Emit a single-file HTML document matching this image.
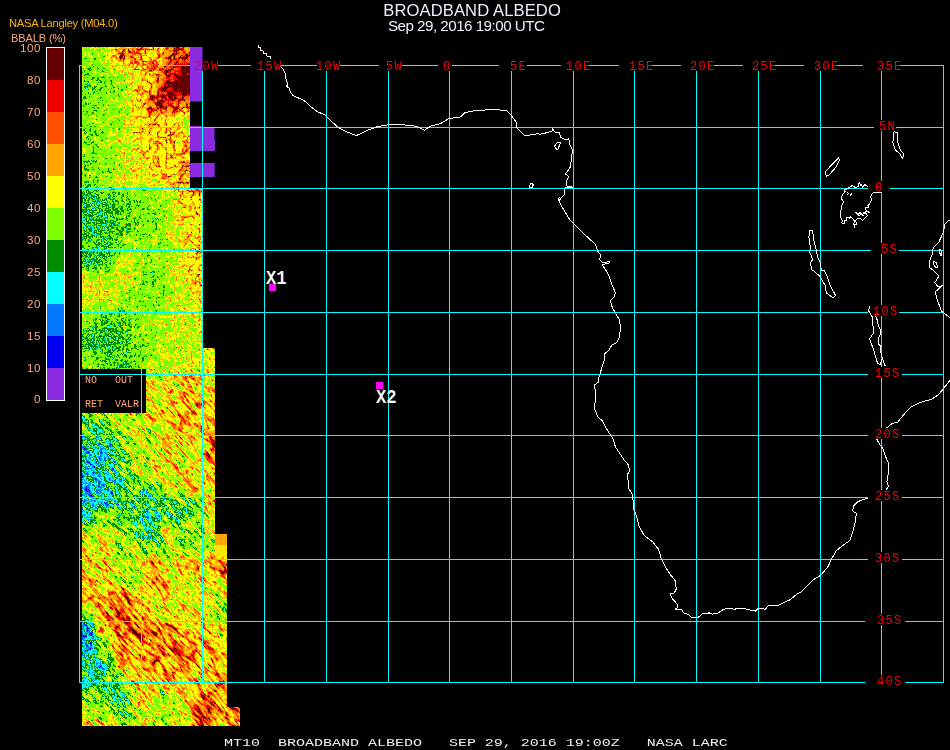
<!DOCTYPE html>
<html lang="en"><head><meta charset="utf-8"><title>BROADBAND ALBEDO Sep 29, 2016 19:00 UTC</title>
<style>
html,body{margin:0;padding:0;background:#000;}
body{width:950px;height:750px;overflow:hidden;position:relative;font-family:"Liberation Sans",sans-serif;}
svg{position:absolute;left:0;top:0;display:block;}
.t{position:absolute;white-space:pre;line-height:1;margin:0;will-change:transform;}
#title{left:0;width:944.2px;text-align:center;top:2.7px;font-size:16.6px;color:#eeeeff;letter-spacing:0.1px;}
#date{left:388px;top:18.1px;font-size:15.2px;color:#eeeeff;letter-spacing:-0.53px;}
#src{left:9.2px;top:18.2px;font-size:11.2px;color:#ffb400;letter-spacing:-0.27px;}
#unit{left:11px;top:32.9px;font-size:11px;color:#ffa878;letter-spacing:-0.1px;}
.cb{right:909.5px;font-size:11.6px;color:#ffa878;text-align:right;letter-spacing:0.5px;}
.lg{font-family:"Liberation Mono",monospace;font-size:10px;color:#ffa878;}
.gl{font-family:"Liberation Mono",monospace;font-size:12px;color:#ff0000;letter-spacing:1.3px;}
.mk{font-family:"Liberation Mono",monospace;font-weight:bold;font-size:19.5px;color:#fff;transform-origin:0 0;transform:scaleX(0.88);}
#foot{left:224px;top:738.4px;font-family:"Liberation Mono",monospace;font-size:10.6px;color:#f2f2f2;transform-origin:0 0;transform:scaleX(1.415);}
</style></head><body>
<svg width="950" height="750" viewBox="0 0 950 750">
<defs>
<filter id="nzA" x="10" y="0" width="320" height="430" filterUnits="userSpaceOnUse" color-interpolation-filters="sRGB">
<feTurbulence type="turbulence" baseFrequency="0.12" numOctaves="3" seed="4" result="n"/>
<feColorMatrix in="n" type="matrix" values="1 0 0 0 0 1 0 0 0 0 1 0 0 0 0 0 0 0 0 1" result="ng0"/>
<feComponentTransfer in="ng0" result="ng1"><feFuncR type="linear" slope="-1" intercept="1"/><feFuncG type="linear" slope="-1" intercept="1"/><feFuncB type="linear" slope="-1" intercept="1"/></feComponentTransfer>
<feComponentTransfer in="ng1" result="ng"><feFuncR type="gamma" amplitude="1" exponent="8" offset="0"/><feFuncG type="gamma" amplitude="1" exponent="8" offset="0"/><feFuncB type="gamma" amplitude="1" exponent="8" offset="0"/></feComponentTransfer>
<feGaussianBlur in="SourceGraphic" stdDeviation="4" result="bl"/>
<feComponentTransfer in="bl" result="amp"><feFuncR type="linear" slope="2.4" intercept="-0.592"/><feFuncG type="linear" slope="2.4" intercept="-0.592"/><feFuncB type="linear" slope="2.4" intercept="-0.592"/></feComponentTransfer>
<feComposite in="amp" in2="ng" operator="arithmetic" k1="1" k2="0" k3="0" k4="0" result="T"/>
<feComposite in="bl" in2="T" operator="arithmetic" k1="0" k2="0.9" k3="1" k4="0" result="v1"/>
<feTurbulence type="fractalNoise" baseFrequency="0.38" numOctaves="2" seed="9" result="m"/>
<feColorMatrix in="m" type="matrix" values="1 0 0 0 0 1 0 0 0 0 1 0 0 0 0 0 0 0 0 1" result="mg"/>
<feComposite in="v1" in2="mg" operator="arithmetic" k1="0" k2="1" k3="0.24" k4="-0.12"/>
</filter>
<filter id="nzB" x="-100" y="290" width="520" height="520" filterUnits="userSpaceOnUse" color-interpolation-filters="sRGB">
<feTurbulence type="turbulence" baseFrequency="0.05 0.22" numOctaves="2" seed="21" result="r0"/>
<feColorMatrix in="r0" type="matrix" values="1 0 0 0 0 1 0 0 0 0 1 0 0 0 0 0 0 0 0 1" result="r1"/>
<feComponentTransfer in="r1" result="r2"><feFuncR type="linear" slope="-1" intercept="1"/><feFuncG type="linear" slope="-1" intercept="1"/><feFuncB type="linear" slope="-1" intercept="1"/></feComponentTransfer>
<feComponentTransfer in="r2" result="ridge"><feFuncR type="gamma" amplitude="1" exponent="7" offset="0"/><feFuncG type="gamma" amplitude="1" exponent="7" offset="0"/><feFuncB type="gamma" amplitude="1" exponent="7" offset="0"/></feComponentTransfer>
<feTurbulence type="fractalNoise" baseFrequency="0.07 0.3" numOctaves="2" seed="11" result="n"/>
<feColorMatrix in="n" type="matrix" values="1 0 0 0 0 1 0 0 0 0 1 0 0 0 0 0 0 0 0 1" result="ng"/>
<feTurbulence type="fractalNoise" baseFrequency="0.33" numOctaves="2" seed="7" result="m"/>
<feColorMatrix in="m" type="matrix" values="1 0 0 0 0 1 0 0 0 0 1 0 0 0 0 0 0 0 0 1" result="mg"/>
<feGaussianBlur in="SourceGraphic" stdDeviation="4" result="bl"/>
<feComposite in="bl" in2="ridge" operator="arithmetic" k1="1" k2="0.85" k3="0" k4="0" result="v1"/>
<feComposite in="v1" in2="ng" operator="arithmetic" k1="0.7" k2="0.65" k3="0" k4="0" result="v2"/>
<feComposite in="v2" in2="mg" operator="arithmetic" k1="0" k2="1" k3="0.3" k4="-0.15"/>
</filter>
<filter id="pal" x="0" y="0" width="950" height="750" filterUnits="userSpaceOnUse" color-interpolation-filters="sRGB">
<feComponentTransfer><feFuncR type="discrete" tableValues="0.541 0.541 0.000 0.000 0.000 0.000 0.498 0.498 1.000 1.000 1.000 1.000 1.000 1.000 0.933 0.933 0.392 0.392 0.392 0.392"/><feFuncG type="discrete" tableValues="0.169 0.169 0.000 0.471 1.000 0.545 1.000 1.000 1.000 1.000 0.647 0.647 0.314 0.314 0.000 0.000 0.000 0.000 0.000 0.000"/><feFuncB type="discrete" tableValues="0.886 0.886 0.933 1.000 1.000 0.000 0.000 0.000 0.000 0.000 0.000 0.000 0.000 0.000 0.000 0.000 0.000 0.000 0.000 0.000"/></feComponentTransfer>
</filter>
<clipPath id="dc"><path d="M82 47H190V188H202V350Q202 348 204 348H213Q215 348 215 350V534H227V707H240V726H82V413H146V369H82Z"/></clipPath>
<clipPath id="dcA"><rect x="60" y="30" width="200" height="339"/></clipPath>
<clipPath id="dcB"><rect x="60" y="369" width="200" height="380"/></clipPath>
</defs>
<g clip-path="url(#dc)"><g filter="url(#pal)">
<g clip-path="url(#dcA)"><g filter="url(#nzA)"><rect x="20" y="0" width="280" height="750" fill="#666"/><rect x="52" y="17" width="47" height="47" fill="rgb(97,97,97)"/><rect x="98" y="17" width="17" height="47" fill="rgb(102,102,102)"/><rect x="114" y="17" width="17" height="47" fill="rgb(148,148,148)"/><rect x="130" y="17" width="17" height="47" fill="rgb(135,135,135)"/><rect x="146" y="17" width="17" height="47" fill="rgb(115,115,115)"/><rect x="162" y="17" width="17" height="47" fill="rgb(158,158,158)"/><rect x="178" y="17" width="17" height="47" fill="rgb(158,158,158)"/><rect x="194" y="17" width="17" height="47" fill="rgb(158,158,158)"/><rect x="210" y="17" width="17" height="47" fill="rgb(158,158,158)"/><rect x="226" y="17" width="47" height="47" fill="rgb(158,158,158)"/><rect x="52" y="63" width="47" height="17" fill="rgb(89,89,89)"/><rect x="98" y="63" width="17" height="17" fill="rgb(92,92,92)"/><rect x="114" y="63" width="17" height="17" fill="rgb(102,102,102)"/><rect x="130" y="63" width="17" height="17" fill="rgb(117,117,117)"/><rect x="146" y="63" width="17" height="17" fill="rgb(130,130,130)"/><rect x="162" y="63" width="17" height="17" fill="rgb(184,184,184)"/><rect x="178" y="63" width="17" height="17" fill="rgb(230,230,230)"/><rect x="194" y="63" width="17" height="17" fill="rgb(230,230,230)"/><rect x="210" y="63" width="17" height="17" fill="rgb(230,230,230)"/><rect x="226" y="63" width="47" height="17" fill="rgb(230,230,230)"/><rect x="52" y="79" width="47" height="17" fill="rgb(84,84,84)"/><rect x="98" y="79" width="17" height="17" fill="rgb(89,89,89)"/><rect x="114" y="79" width="17" height="17" fill="rgb(94,94,94)"/><rect x="130" y="79" width="17" height="17" fill="rgb(115,115,115)"/><rect x="146" y="79" width="17" height="17" fill="rgb(135,135,135)"/><rect x="162" y="79" width="17" height="17" fill="rgb(204,204,204)"/><rect x="178" y="79" width="17" height="17" fill="rgb(240,240,240)"/><rect x="194" y="79" width="17" height="17" fill="rgb(240,240,240)"/><rect x="210" y="79" width="17" height="17" fill="rgb(240,240,240)"/><rect x="226" y="79" width="47" height="17" fill="rgb(240,240,240)"/><rect x="52" y="95" width="47" height="17" fill="rgb(84,84,84)"/><rect x="98" y="95" width="17" height="17" fill="rgb(92,92,92)"/><rect x="114" y="95" width="17" height="17" fill="rgb(94,94,94)"/><rect x="130" y="95" width="17" height="17" fill="rgb(117,117,117)"/><rect x="146" y="95" width="17" height="17" fill="rgb(168,168,168)"/><rect x="162" y="95" width="17" height="17" fill="rgb(176,176,176)"/><rect x="178" y="95" width="17" height="17" fill="rgb(148,148,148)"/><rect x="194" y="95" width="17" height="17" fill="rgb(148,148,148)"/><rect x="210" y="95" width="17" height="17" fill="rgb(148,148,148)"/><rect x="226" y="95" width="47" height="17" fill="rgb(148,148,148)"/><rect x="52" y="111" width="47" height="17" fill="rgb(89,89,89)"/><rect x="98" y="111" width="17" height="17" fill="rgb(92,92,92)"/><rect x="114" y="111" width="17" height="17" fill="rgb(97,97,97)"/><rect x="130" y="111" width="17" height="17" fill="rgb(120,120,120)"/><rect x="146" y="111" width="17" height="17" fill="rgb(135,135,135)"/><rect x="162" y="111" width="17" height="17" fill="rgb(125,125,125)"/><rect x="178" y="111" width="17" height="17" fill="rgb(97,97,97)"/><rect x="194" y="111" width="17" height="17" fill="rgb(97,97,97)"/><rect x="210" y="111" width="17" height="17" fill="rgb(97,97,97)"/><rect x="226" y="111" width="47" height="17" fill="rgb(97,97,97)"/><rect x="52" y="127" width="47" height="17" fill="rgb(89,89,89)"/><rect x="98" y="127" width="17" height="17" fill="rgb(92,92,92)"/><rect x="114" y="127" width="17" height="17" fill="rgb(102,102,102)"/><rect x="130" y="127" width="17" height="17" fill="rgb(120,120,120)"/><rect x="146" y="127" width="17" height="17" fill="rgb(130,130,130)"/><rect x="162" y="127" width="17" height="17" fill="rgb(122,122,122)"/><rect x="178" y="127" width="17" height="17" fill="rgb(115,115,115)"/><rect x="194" y="127" width="17" height="17" fill="rgb(115,115,115)"/><rect x="210" y="127" width="17" height="17" fill="rgb(115,115,115)"/><rect x="226" y="127" width="47" height="17" fill="rgb(115,115,115)"/><rect x="52" y="143" width="47" height="17" fill="rgb(89,89,89)"/><rect x="98" y="143" width="17" height="17" fill="rgb(92,92,92)"/><rect x="114" y="143" width="17" height="17" fill="rgb(102,102,102)"/><rect x="130" y="143" width="17" height="17" fill="rgb(115,115,115)"/><rect x="146" y="143" width="17" height="17" fill="rgb(125,125,125)"/><rect x="162" y="143" width="17" height="17" fill="rgb(125,125,125)"/><rect x="178" y="143" width="17" height="17" fill="rgb(125,125,125)"/><rect x="194" y="143" width="17" height="17" fill="rgb(125,125,125)"/><rect x="210" y="143" width="17" height="17" fill="rgb(125,125,125)"/><rect x="226" y="143" width="47" height="17" fill="rgb(125,125,125)"/><rect x="52" y="159" width="47" height="17" fill="rgb(87,87,87)"/><rect x="98" y="159" width="17" height="17" fill="rgb(92,92,92)"/><rect x="114" y="159" width="17" height="17" fill="rgb(99,99,99)"/><rect x="130" y="159" width="17" height="17" fill="rgb(112,112,112)"/><rect x="146" y="159" width="17" height="17" fill="rgb(120,120,120)"/><rect x="162" y="159" width="17" height="17" fill="rgb(122,122,122)"/><rect x="178" y="159" width="17" height="17" fill="rgb(145,145,145)"/><rect x="194" y="159" width="17" height="17" fill="rgb(145,145,145)"/><rect x="210" y="159" width="17" height="17" fill="rgb(145,145,145)"/><rect x="226" y="159" width="47" height="17" fill="rgb(145,145,145)"/><rect x="52" y="175" width="47" height="17" fill="rgb(89,89,89)"/><rect x="98" y="175" width="17" height="17" fill="rgb(92,92,92)"/><rect x="114" y="175" width="17" height="17" fill="rgb(97,97,97)"/><rect x="130" y="175" width="17" height="17" fill="rgb(102,102,102)"/><rect x="146" y="175" width="17" height="17" fill="rgb(110,110,110)"/><rect x="162" y="175" width="17" height="17" fill="rgb(117,117,117)"/><rect x="178" y="175" width="17" height="17" fill="rgb(145,145,145)"/><rect x="194" y="175" width="17" height="17" fill="rgb(145,145,145)"/><rect x="210" y="175" width="17" height="17" fill="rgb(145,145,145)"/><rect x="226" y="175" width="47" height="17" fill="rgb(145,145,145)"/><rect x="52" y="191" width="47" height="17" fill="rgb(74,74,74)"/><rect x="98" y="191" width="17" height="17" fill="rgb(79,79,79)"/><rect x="114" y="191" width="17" height="17" fill="rgb(84,84,84)"/><rect x="130" y="191" width="17" height="17" fill="rgb(89,89,89)"/><rect x="146" y="191" width="17" height="17" fill="rgb(89,89,89)"/><rect x="162" y="191" width="17" height="17" fill="rgb(97,97,97)"/><rect x="178" y="191" width="17" height="17" fill="rgb(120,120,120)"/><rect x="194" y="191" width="17" height="17" fill="rgb(125,125,125)"/><rect x="210" y="191" width="17" height="17" fill="rgb(125,125,125)"/><rect x="226" y="191" width="47" height="17" fill="rgb(125,125,125)"/><rect x="52" y="207" width="47" height="17" fill="rgb(74,74,74)"/><rect x="98" y="207" width="17" height="17" fill="rgb(76,76,76)"/><rect x="114" y="207" width="17" height="17" fill="rgb(82,82,82)"/><rect x="130" y="207" width="17" height="17" fill="rgb(89,89,89)"/><rect x="146" y="207" width="17" height="17" fill="rgb(92,92,92)"/><rect x="162" y="207" width="17" height="17" fill="rgb(97,97,97)"/><rect x="178" y="207" width="17" height="17" fill="rgb(117,117,117)"/><rect x="194" y="207" width="17" height="17" fill="rgb(122,122,122)"/><rect x="210" y="207" width="17" height="17" fill="rgb(122,122,122)"/><rect x="226" y="207" width="47" height="17" fill="rgb(122,122,122)"/><rect x="52" y="223" width="47" height="17" fill="rgb(74,74,74)"/><rect x="98" y="223" width="17" height="17" fill="rgb(76,76,76)"/><rect x="114" y="223" width="17" height="17" fill="rgb(82,82,82)"/><rect x="130" y="223" width="17" height="17" fill="rgb(89,89,89)"/><rect x="146" y="223" width="17" height="17" fill="rgb(92,92,92)"/><rect x="162" y="223" width="17" height="17" fill="rgb(97,97,97)"/><rect x="178" y="223" width="17" height="17" fill="rgb(115,115,115)"/><rect x="194" y="223" width="17" height="17" fill="rgb(120,120,120)"/><rect x="210" y="223" width="17" height="17" fill="rgb(120,120,120)"/><rect x="226" y="223" width="47" height="17" fill="rgb(120,120,120)"/><rect x="52" y="239" width="47" height="17" fill="rgb(79,79,79)"/><rect x="98" y="239" width="17" height="17" fill="rgb(79,79,79)"/><rect x="114" y="239" width="17" height="17" fill="rgb(92,92,92)"/><rect x="130" y="239" width="17" height="17" fill="rgb(94,94,94)"/><rect x="146" y="239" width="17" height="17" fill="rgb(94,94,94)"/><rect x="162" y="239" width="17" height="17" fill="rgb(99,99,99)"/><rect x="178" y="239" width="17" height="17" fill="rgb(115,115,115)"/><rect x="194" y="239" width="17" height="17" fill="rgb(122,122,122)"/><rect x="210" y="239" width="17" height="17" fill="rgb(122,122,122)"/><rect x="226" y="239" width="47" height="17" fill="rgb(122,122,122)"/><rect x="52" y="255" width="47" height="17" fill="rgb(76,76,76)"/><rect x="98" y="255" width="17" height="17" fill="rgb(76,76,76)"/><rect x="114" y="255" width="17" height="17" fill="rgb(99,99,99)"/><rect x="130" y="255" width="17" height="17" fill="rgb(97,97,97)"/><rect x="146" y="255" width="17" height="17" fill="rgb(92,92,92)"/><rect x="162" y="255" width="17" height="17" fill="rgb(97,97,97)"/><rect x="178" y="255" width="17" height="17" fill="rgb(115,115,115)"/><rect x="194" y="255" width="17" height="17" fill="rgb(125,125,125)"/><rect x="210" y="255" width="17" height="17" fill="rgb(125,125,125)"/><rect x="226" y="255" width="47" height="17" fill="rgb(125,125,125)"/><rect x="52" y="271" width="47" height="17" fill="rgb(105,105,105)"/><rect x="98" y="271" width="17" height="17" fill="rgb(102,102,102)"/><rect x="114" y="271" width="17" height="17" fill="rgb(102,102,102)"/><rect x="130" y="271" width="17" height="17" fill="rgb(92,92,92)"/><rect x="146" y="271" width="17" height="17" fill="rgb(89,89,89)"/><rect x="162" y="271" width="17" height="17" fill="rgb(97,97,97)"/><rect x="178" y="271" width="17" height="17" fill="rgb(115,115,115)"/><rect x="194" y="271" width="17" height="17" fill="rgb(125,125,125)"/><rect x="210" y="271" width="17" height="17" fill="rgb(125,125,125)"/><rect x="226" y="271" width="47" height="17" fill="rgb(125,125,125)"/><rect x="52" y="287" width="47" height="17" fill="rgb(112,112,112)"/><rect x="98" y="287" width="17" height="17" fill="rgb(110,110,110)"/><rect x="114" y="287" width="17" height="17" fill="rgb(102,102,102)"/><rect x="130" y="287" width="17" height="17" fill="rgb(92,92,92)"/><rect x="146" y="287" width="17" height="17" fill="rgb(92,92,92)"/><rect x="162" y="287" width="17" height="17" fill="rgb(97,97,97)"/><rect x="178" y="287" width="17" height="17" fill="rgb(107,107,107)"/><rect x="194" y="287" width="17" height="17" fill="rgb(117,117,117)"/><rect x="210" y="287" width="17" height="17" fill="rgb(117,117,117)"/><rect x="226" y="287" width="47" height="17" fill="rgb(117,117,117)"/><rect x="52" y="303" width="47" height="17" fill="rgb(99,99,99)"/><rect x="98" y="303" width="17" height="17" fill="rgb(89,89,89)"/><rect x="114" y="303" width="17" height="17" fill="rgb(87,87,87)"/><rect x="130" y="303" width="17" height="17" fill="rgb(92,92,92)"/><rect x="146" y="303" width="17" height="17" fill="rgb(94,94,94)"/><rect x="162" y="303" width="17" height="17" fill="rgb(99,99,99)"/><rect x="178" y="303" width="17" height="17" fill="rgb(105,105,105)"/><rect x="194" y="303" width="17" height="17" fill="rgb(115,115,115)"/><rect x="210" y="303" width="17" height="17" fill="rgb(115,115,115)"/><rect x="226" y="303" width="47" height="17" fill="rgb(115,115,115)"/><rect x="52" y="319" width="47" height="17" fill="rgb(84,84,84)"/><rect x="98" y="319" width="17" height="17" fill="rgb(76,76,76)"/><rect x="114" y="319" width="17" height="17" fill="rgb(79,79,79)"/><rect x="130" y="319" width="17" height="17" fill="rgb(92,92,92)"/><rect x="146" y="319" width="17" height="17" fill="rgb(97,97,97)"/><rect x="162" y="319" width="17" height="17" fill="rgb(102,102,102)"/><rect x="178" y="319" width="17" height="17" fill="rgb(102,102,102)"/><rect x="194" y="319" width="17" height="17" fill="rgb(115,115,115)"/><rect x="210" y="319" width="17" height="17" fill="rgb(115,115,115)"/><rect x="226" y="319" width="47" height="17" fill="rgb(115,115,115)"/><rect x="52" y="335" width="47" height="17" fill="rgb(74,74,74)"/><rect x="98" y="335" width="17" height="17" fill="rgb(74,74,74)"/><rect x="114" y="335" width="17" height="17" fill="rgb(76,76,76)"/><rect x="130" y="335" width="17" height="17" fill="rgb(87,87,87)"/><rect x="146" y="335" width="17" height="17" fill="rgb(97,97,97)"/><rect x="162" y="335" width="17" height="17" fill="rgb(102,102,102)"/><rect x="178" y="335" width="17" height="17" fill="rgb(102,102,102)"/><rect x="194" y="335" width="17" height="17" fill="rgb(112,112,112)"/><rect x="210" y="335" width="17" height="17" fill="rgb(112,112,112)"/><rect x="226" y="335" width="47" height="17" fill="rgb(112,112,112)"/><rect x="52" y="351" width="47" height="17" fill="rgb(89,89,89)"/><rect x="98" y="351" width="17" height="17" fill="rgb(82,82,82)"/><rect x="114" y="351" width="17" height="17" fill="rgb(79,79,79)"/><rect x="130" y="351" width="17" height="17" fill="rgb(87,87,87)"/><rect x="146" y="351" width="17" height="17" fill="rgb(97,97,97)"/><rect x="162" y="351" width="17" height="17" fill="rgb(99,99,99)"/><rect x="178" y="351" width="17" height="17" fill="rgb(105,105,105)"/><rect x="194" y="351" width="17" height="17" fill="rgb(110,110,110)"/><rect x="210" y="351" width="17" height="17" fill="rgb(120,120,120)"/><rect x="226" y="351" width="47" height="17" fill="rgb(120,120,120)"/><rect x="52" y="367" width="47" height="17" fill="rgb(89,89,89)"/><rect x="98" y="367" width="17" height="17" fill="rgb(82,82,82)"/><rect x="114" y="367" width="17" height="17" fill="rgb(82,82,82)"/><rect x="130" y="367" width="17" height="17" fill="rgb(87,87,87)"/><rect x="146" y="367" width="17" height="17" fill="rgb(97,97,97)"/><rect x="162" y="367" width="17" height="17" fill="rgb(102,102,102)"/><rect x="178" y="367" width="17" height="17" fill="rgb(112,112,112)"/><rect x="194" y="367" width="17" height="17" fill="rgb(107,107,107)"/><rect x="210" y="367" width="17" height="17" fill="rgb(112,112,112)"/><rect x="226" y="367" width="47" height="17" fill="rgb(112,112,112)"/><rect x="52" y="383" width="47" height="17" fill="rgb(97,97,97)"/><rect x="98" y="383" width="17" height="17" fill="rgb(97,97,97)"/><rect x="114" y="383" width="17" height="17" fill="rgb(97,97,97)"/><rect x="130" y="383" width="17" height="17" fill="rgb(102,102,102)"/><rect x="146" y="383" width="17" height="17" fill="rgb(107,107,107)"/><rect x="162" y="383" width="17" height="17" fill="rgb(112,112,112)"/><rect x="178" y="383" width="17" height="17" fill="rgb(122,122,122)"/><rect x="194" y="383" width="17" height="17" fill="rgb(112,112,112)"/><rect x="210" y="383" width="17" height="17" fill="rgb(117,117,117)"/><rect x="226" y="383" width="47" height="17" fill="rgb(117,117,117)"/><rect x="52" y="399" width="47" height="17" fill="rgb(89,89,89)"/><rect x="98" y="399" width="17" height="17" fill="rgb(89,89,89)"/><rect x="114" y="399" width="17" height="17" fill="rgb(94,94,94)"/><rect x="130" y="399" width="17" height="17" fill="rgb(102,102,102)"/><rect x="146" y="399" width="17" height="17" fill="rgb(107,107,107)"/><rect x="162" y="399" width="17" height="17" fill="rgb(117,117,117)"/><rect x="178" y="399" width="17" height="17" fill="rgb(128,128,128)"/><rect x="194" y="399" width="17" height="17" fill="rgb(122,122,122)"/><rect x="210" y="399" width="17" height="17" fill="rgb(128,128,128)"/><rect x="226" y="399" width="47" height="17" fill="rgb(128,128,128)"/><rect x="52" y="415" width="47" height="17" fill="rgb(76,76,76)"/><rect x="98" y="415" width="17" height="17" fill="rgb(87,87,87)"/><rect x="114" y="415" width="17" height="17" fill="rgb(97,97,97)"/><rect x="130" y="415" width="17" height="17" fill="rgb(112,112,112)"/><rect x="146" y="415" width="17" height="17" fill="rgb(107,107,107)"/><rect x="162" y="415" width="17" height="17" fill="rgb(117,117,117)"/><rect x="178" y="415" width="17" height="17" fill="rgb(117,117,117)"/><rect x="194" y="415" width="17" height="17" fill="rgb(122,122,122)"/><rect x="210" y="415" width="17" height="17" fill="rgb(122,122,122)"/><rect x="226" y="415" width="47" height="17" fill="rgb(122,122,122)"/><rect x="52" y="431" width="47" height="17" fill="rgb(61,61,61)"/><rect x="98" y="431" width="17" height="17" fill="rgb(66,66,66)"/><rect x="114" y="431" width="17" height="17" fill="rgb(82,82,82)"/><rect x="130" y="431" width="17" height="17" fill="rgb(92,92,92)"/><rect x="146" y="431" width="17" height="17" fill="rgb(97,97,97)"/><rect x="162" y="431" width="17" height="17" fill="rgb(115,115,115)"/><rect x="178" y="431" width="17" height="17" fill="rgb(128,128,128)"/><rect x="194" y="431" width="17" height="17" fill="rgb(117,117,117)"/><rect x="210" y="431" width="17" height="17" fill="rgb(163,163,163)"/><rect x="226" y="431" width="47" height="17" fill="rgb(163,163,163)"/><rect x="52" y="447" width="47" height="17" fill="rgb(51,51,51)"/><rect x="98" y="447" width="17" height="17" fill="rgb(56,56,56)"/><rect x="114" y="447" width="17" height="17" fill="rgb(82,82,82)"/><rect x="130" y="447" width="17" height="17" fill="rgb(94,94,94)"/><rect x="146" y="447" width="17" height="17" fill="rgb(97,97,97)"/><rect x="162" y="447" width="17" height="17" fill="rgb(107,107,107)"/><rect x="178" y="447" width="17" height="17" fill="rgb(102,102,102)"/><rect x="194" y="447" width="17" height="17" fill="rgb(107,107,107)"/><rect x="210" y="447" width="17" height="17" fill="rgb(158,158,158)"/><rect x="226" y="447" width="47" height="17" fill="rgb(158,158,158)"/><rect x="52" y="463" width="47" height="17" fill="rgb(48,48,48)"/><rect x="98" y="463" width="17" height="17" fill="rgb(54,54,54)"/><rect x="114" y="463" width="17" height="17" fill="rgb(76,76,76)"/><rect x="130" y="463" width="17" height="17" fill="rgb(89,89,89)"/><rect x="146" y="463" width="17" height="17" fill="rgb(107,107,107)"/><rect x="162" y="463" width="17" height="17" fill="rgb(110,110,110)"/><rect x="178" y="463" width="17" height="17" fill="rgb(107,107,107)"/><rect x="194" y="463" width="17" height="17" fill="rgb(107,107,107)"/><rect x="210" y="463" width="17" height="17" fill="rgb(138,138,138)"/><rect x="226" y="463" width="47" height="17" fill="rgb(138,138,138)"/><rect x="52" y="479" width="47" height="17" fill="rgb(48,48,48)"/><rect x="98" y="479" width="17" height="17" fill="rgb(54,54,54)"/><rect x="114" y="479" width="17" height="17" fill="rgb(66,66,66)"/><rect x="130" y="479" width="17" height="17" fill="rgb(76,76,76)"/><rect x="146" y="479" width="17" height="17" fill="rgb(69,69,69)"/><rect x="162" y="479" width="17" height="17" fill="rgb(92,92,92)"/><rect x="178" y="479" width="17" height="17" fill="rgb(107,107,107)"/><rect x="194" y="479" width="17" height="17" fill="rgb(110,110,110)"/><rect x="210" y="479" width="17" height="17" fill="rgb(138,138,138)"/><rect x="226" y="479" width="47" height="17" fill="rgb(138,138,138)"/><rect x="52" y="495" width="47" height="17" fill="rgb(54,54,54)"/><rect x="98" y="495" width="17" height="17" fill="rgb(61,61,61)"/><rect x="114" y="495" width="17" height="17" fill="rgb(66,66,66)"/><rect x="130" y="495" width="17" height="17" fill="rgb(71,71,71)"/><rect x="146" y="495" width="17" height="17" fill="rgb(66,66,66)"/><rect x="162" y="495" width="17" height="17" fill="rgb(66,66,66)"/><rect x="178" y="495" width="17" height="17" fill="rgb(76,76,76)"/><rect x="194" y="495" width="17" height="17" fill="rgb(92,92,92)"/><rect x="210" y="495" width="17" height="17" fill="rgb(143,143,143)"/><rect x="226" y="495" width="47" height="17" fill="rgb(143,143,143)"/><rect x="52" y="511" width="47" height="17" fill="rgb(61,61,61)"/><rect x="98" y="511" width="17" height="17" fill="rgb(92,92,92)"/><rect x="114" y="511" width="17" height="17" fill="rgb(76,76,76)"/><rect x="130" y="511" width="17" height="17" fill="rgb(66,66,66)"/><rect x="146" y="511" width="17" height="17" fill="rgb(66,66,66)"/><rect x="162" y="511" width="17" height="17" fill="rgb(66,66,66)"/><rect x="178" y="511" width="17" height="17" fill="rgb(76,76,76)"/><rect x="194" y="511" width="17" height="17" fill="rgb(87,87,87)"/><rect x="210" y="511" width="17" height="17" fill="rgb(117,117,117)"/><rect x="226" y="511" width="47" height="17" fill="rgb(117,117,117)"/><rect x="52" y="527" width="47" height="17" fill="rgb(102,102,102)"/><rect x="98" y="527" width="17" height="17" fill="rgb(107,107,107)"/><rect x="114" y="527" width="17" height="17" fill="rgb(82,82,82)"/><rect x="130" y="527" width="17" height="17" fill="rgb(66,66,66)"/><rect x="146" y="527" width="17" height="17" fill="rgb(66,66,66)"/><rect x="162" y="527" width="17" height="17" fill="rgb(102,102,102)"/><rect x="178" y="527" width="17" height="17" fill="rgb(84,84,84)"/><rect x="194" y="527" width="17" height="17" fill="rgb(87,87,87)"/><rect x="210" y="527" width="17" height="17" fill="rgb(102,102,102)"/><rect x="226" y="527" width="47" height="17" fill="rgb(128,128,128)"/><rect x="52" y="543" width="47" height="17" fill="rgb(112,112,112)"/><rect x="98" y="543" width="17" height="17" fill="rgb(112,112,112)"/><rect x="114" y="543" width="17" height="17" fill="rgb(92,92,92)"/><rect x="130" y="543" width="17" height="17" fill="rgb(107,107,107)"/><rect x="146" y="543" width="17" height="17" fill="rgb(76,76,76)"/><rect x="162" y="543" width="17" height="17" fill="rgb(97,97,97)"/><rect x="178" y="543" width="17" height="17" fill="rgb(92,92,92)"/><rect x="194" y="543" width="17" height="17" fill="rgb(89,89,89)"/><rect x="210" y="543" width="17" height="17" fill="rgb(115,115,115)"/><rect x="226" y="543" width="47" height="17" fill="rgb(107,107,107)"/><rect x="52" y="559" width="47" height="17" fill="rgb(112,112,112)"/><rect x="98" y="559" width="17" height="17" fill="rgb(122,122,122)"/><rect x="114" y="559" width="17" height="17" fill="rgb(87,87,87)"/><rect x="130" y="559" width="17" height="17" fill="rgb(107,107,107)"/><rect x="146" y="559" width="17" height="17" fill="rgb(138,138,138)"/><rect x="162" y="559" width="17" height="17" fill="rgb(92,92,92)"/><rect x="178" y="559" width="17" height="17" fill="rgb(138,138,138)"/><rect x="194" y="559" width="17" height="17" fill="rgb(107,107,107)"/><rect x="210" y="559" width="17" height="17" fill="rgb(148,148,148)"/><rect x="226" y="559" width="47" height="17" fill="rgb(148,148,148)"/><rect x="52" y="575" width="47" height="17" fill="rgb(122,122,122)"/><rect x="98" y="575" width="17" height="17" fill="rgb(117,117,117)"/><rect x="114" y="575" width="17" height="17" fill="rgb(87,87,87)"/><rect x="130" y="575" width="17" height="17" fill="rgb(97,97,97)"/><rect x="146" y="575" width="17" height="17" fill="rgb(143,143,143)"/><rect x="162" y="575" width="17" height="17" fill="rgb(107,107,107)"/><rect x="178" y="575" width="17" height="17" fill="rgb(102,102,102)"/><rect x="194" y="575" width="17" height="17" fill="rgb(107,107,107)"/><rect x="210" y="575" width="17" height="17" fill="rgb(112,112,112)"/><rect x="226" y="575" width="47" height="17" fill="rgb(112,112,112)"/><rect x="52" y="591" width="47" height="17" fill="rgb(112,112,112)"/><rect x="98" y="591" width="17" height="17" fill="rgb(133,133,133)"/><rect x="114" y="591" width="17" height="17" fill="rgb(153,153,153)"/><rect x="130" y="591" width="17" height="17" fill="rgb(122,122,122)"/><rect x="146" y="591" width="17" height="17" fill="rgb(92,92,92)"/><rect x="162" y="591" width="17" height="17" fill="rgb(128,128,128)"/><rect x="178" y="591" width="17" height="17" fill="rgb(112,112,112)"/><rect x="194" y="591" width="17" height="17" fill="rgb(112,112,112)"/><rect x="210" y="591" width="17" height="17" fill="rgb(97,97,97)"/><rect x="226" y="591" width="47" height="17" fill="rgb(97,97,97)"/><rect x="52" y="607" width="47" height="17" fill="rgb(87,87,87)"/><rect x="98" y="607" width="17" height="17" fill="rgb(122,122,122)"/><rect x="114" y="607" width="17" height="17" fill="rgb(158,158,158)"/><rect x="130" y="607" width="17" height="17" fill="rgb(148,148,148)"/><rect x="146" y="607" width="17" height="17" fill="rgb(102,102,102)"/><rect x="162" y="607" width="17" height="17" fill="rgb(107,107,107)"/><rect x="178" y="607" width="17" height="17" fill="rgb(120,120,120)"/><rect x="194" y="607" width="17" height="17" fill="rgb(107,107,107)"/><rect x="210" y="607" width="17" height="17" fill="rgb(92,92,92)"/><rect x="226" y="607" width="47" height="17" fill="rgb(92,92,92)"/><rect x="52" y="623" width="47" height="17" fill="rgb(51,51,51)"/><rect x="98" y="623" width="17" height="17" fill="rgb(122,122,122)"/><rect x="114" y="623" width="17" height="17" fill="rgb(138,138,138)"/><rect x="130" y="623" width="17" height="17" fill="rgb(153,153,153)"/><rect x="146" y="623" width="17" height="17" fill="rgb(156,156,156)"/><rect x="162" y="623" width="17" height="17" fill="rgb(143,143,143)"/><rect x="178" y="623" width="17" height="17" fill="rgb(112,112,112)"/><rect x="194" y="623" width="17" height="17" fill="rgb(122,122,122)"/><rect x="210" y="623" width="17" height="17" fill="rgb(112,112,112)"/><rect x="226" y="623" width="47" height="17" fill="rgb(112,112,112)"/><rect x="52" y="639" width="47" height="17" fill="rgb(48,48,48)"/><rect x="98" y="639" width="17" height="17" fill="rgb(97,97,97)"/><rect x="114" y="639" width="17" height="17" fill="rgb(135,135,135)"/><rect x="130" y="639" width="17" height="17" fill="rgb(138,138,138)"/><rect x="146" y="639" width="17" height="17" fill="rgb(150,150,150)"/><rect x="162" y="639" width="17" height="17" fill="rgb(143,143,143)"/><rect x="178" y="639" width="17" height="17" fill="rgb(133,133,133)"/><rect x="194" y="639" width="17" height="17" fill="rgb(128,128,128)"/><rect x="210" y="639" width="17" height="17" fill="rgb(128,128,128)"/><rect x="226" y="639" width="47" height="17" fill="rgb(128,128,128)"/><rect x="52" y="655" width="47" height="17" fill="rgb(54,54,54)"/><rect x="98" y="655" width="17" height="17" fill="rgb(69,69,69)"/><rect x="114" y="655" width="17" height="17" fill="rgb(122,122,122)"/><rect x="130" y="655" width="17" height="17" fill="rgb(135,135,135)"/><rect x="146" y="655" width="17" height="17" fill="rgb(143,143,143)"/><rect x="162" y="655" width="17" height="17" fill="rgb(133,133,133)"/><rect x="178" y="655" width="17" height="17" fill="rgb(138,138,138)"/><rect x="194" y="655" width="17" height="17" fill="rgb(128,128,128)"/><rect x="210" y="655" width="17" height="17" fill="rgb(122,122,122)"/><rect x="226" y="655" width="47" height="17" fill="rgb(122,122,122)"/><rect x="52" y="671" width="47" height="17" fill="rgb(66,66,66)"/><rect x="98" y="671" width="17" height="17" fill="rgb(71,71,71)"/><rect x="114" y="671" width="17" height="17" fill="rgb(82,82,82)"/><rect x="130" y="671" width="17" height="17" fill="rgb(133,133,133)"/><rect x="146" y="671" width="17" height="17" fill="rgb(117,117,117)"/><rect x="162" y="671" width="17" height="17" fill="rgb(138,138,138)"/><rect x="178" y="671" width="17" height="17" fill="rgb(122,122,122)"/><rect x="194" y="671" width="17" height="17" fill="rgb(112,112,112)"/><rect x="210" y="671" width="17" height="17" fill="rgb(138,138,138)"/><rect x="226" y="671" width="47" height="17" fill="rgb(138,138,138)"/><rect x="52" y="687" width="47" height="17" fill="rgb(76,76,76)"/><rect x="98" y="687" width="17" height="17" fill="rgb(76,76,76)"/><rect x="114" y="687" width="17" height="17" fill="rgb(66,66,66)"/><rect x="130" y="687" width="17" height="17" fill="rgb(117,117,117)"/><rect x="146" y="687" width="17" height="17" fill="rgb(102,102,102)"/><rect x="162" y="687" width="17" height="17" fill="rgb(94,94,94)"/><rect x="178" y="687" width="17" height="17" fill="rgb(107,107,107)"/><rect x="194" y="687" width="17" height="17" fill="rgb(153,153,153)"/><rect x="210" y="687" width="17" height="17" fill="rgb(128,128,128)"/><rect x="226" y="687" width="47" height="17" fill="rgb(128,128,128)"/><rect x="52" y="703" width="47" height="17" fill="rgb(97,97,97)"/><rect x="98" y="703" width="17" height="17" fill="rgb(82,82,82)"/><rect x="114" y="703" width="17" height="17" fill="rgb(66,66,66)"/><rect x="130" y="703" width="17" height="17" fill="rgb(107,107,107)"/><rect x="146" y="703" width="17" height="17" fill="rgb(97,97,97)"/><rect x="162" y="703" width="17" height="17" fill="rgb(84,84,84)"/><rect x="178" y="703" width="17" height="17" fill="rgb(97,97,97)"/><rect x="194" y="703" width="17" height="17" fill="rgb(173,173,173)"/><rect x="210" y="703" width="17" height="17" fill="rgb(133,133,133)"/><rect x="226" y="703" width="47" height="17" fill="rgb(148,148,148)"/><rect x="52" y="719" width="47" height="47" fill="rgb(117,117,117)"/><rect x="98" y="719" width="17" height="47" fill="rgb(112,112,112)"/><rect x="114" y="719" width="17" height="47" fill="rgb(97,97,97)"/><rect x="130" y="719" width="17" height="47" fill="rgb(117,117,117)"/><rect x="146" y="719" width="17" height="47" fill="rgb(112,112,112)"/><rect x="162" y="719" width="17" height="47" fill="rgb(97,97,97)"/><rect x="178" y="719" width="17" height="47" fill="rgb(117,117,117)"/><rect x="194" y="719" width="17" height="47" fill="rgb(163,163,163)"/><rect x="210" y="719" width="17" height="47" fill="rgb(122,122,122)"/><rect x="226" y="719" width="47" height="47" fill="rgb(133,133,133)"/></g></g>
<g clip-path="url(#dcB)"><g transform="rotate(48 160 550)"><g filter="url(#nzB)"><g transform="rotate(-48 160 550)"><rect x="-200" y="100" width="800" height="900" fill="#666"/><rect x="52" y="17" width="47" height="47" fill="rgb(97,97,97)"/><rect x="98" y="17" width="17" height="47" fill="rgb(102,102,102)"/><rect x="114" y="17" width="17" height="47" fill="rgb(148,148,148)"/><rect x="130" y="17" width="17" height="47" fill="rgb(135,135,135)"/><rect x="146" y="17" width="17" height="47" fill="rgb(115,115,115)"/><rect x="162" y="17" width="17" height="47" fill="rgb(158,158,158)"/><rect x="178" y="17" width="17" height="47" fill="rgb(158,158,158)"/><rect x="194" y="17" width="17" height="47" fill="rgb(158,158,158)"/><rect x="210" y="17" width="17" height="47" fill="rgb(158,158,158)"/><rect x="226" y="17" width="47" height="47" fill="rgb(158,158,158)"/><rect x="52" y="63" width="47" height="17" fill="rgb(89,89,89)"/><rect x="98" y="63" width="17" height="17" fill="rgb(92,92,92)"/><rect x="114" y="63" width="17" height="17" fill="rgb(102,102,102)"/><rect x="130" y="63" width="17" height="17" fill="rgb(117,117,117)"/><rect x="146" y="63" width="17" height="17" fill="rgb(130,130,130)"/><rect x="162" y="63" width="17" height="17" fill="rgb(184,184,184)"/><rect x="178" y="63" width="17" height="17" fill="rgb(230,230,230)"/><rect x="194" y="63" width="17" height="17" fill="rgb(230,230,230)"/><rect x="210" y="63" width="17" height="17" fill="rgb(230,230,230)"/><rect x="226" y="63" width="47" height="17" fill="rgb(230,230,230)"/><rect x="52" y="79" width="47" height="17" fill="rgb(84,84,84)"/><rect x="98" y="79" width="17" height="17" fill="rgb(89,89,89)"/><rect x="114" y="79" width="17" height="17" fill="rgb(94,94,94)"/><rect x="130" y="79" width="17" height="17" fill="rgb(115,115,115)"/><rect x="146" y="79" width="17" height="17" fill="rgb(135,135,135)"/><rect x="162" y="79" width="17" height="17" fill="rgb(204,204,204)"/><rect x="178" y="79" width="17" height="17" fill="rgb(240,240,240)"/><rect x="194" y="79" width="17" height="17" fill="rgb(240,240,240)"/><rect x="210" y="79" width="17" height="17" fill="rgb(240,240,240)"/><rect x="226" y="79" width="47" height="17" fill="rgb(240,240,240)"/><rect x="52" y="95" width="47" height="17" fill="rgb(84,84,84)"/><rect x="98" y="95" width="17" height="17" fill="rgb(92,92,92)"/><rect x="114" y="95" width="17" height="17" fill="rgb(94,94,94)"/><rect x="130" y="95" width="17" height="17" fill="rgb(117,117,117)"/><rect x="146" y="95" width="17" height="17" fill="rgb(168,168,168)"/><rect x="162" y="95" width="17" height="17" fill="rgb(176,176,176)"/><rect x="178" y="95" width="17" height="17" fill="rgb(148,148,148)"/><rect x="194" y="95" width="17" height="17" fill="rgb(148,148,148)"/><rect x="210" y="95" width="17" height="17" fill="rgb(148,148,148)"/><rect x="226" y="95" width="47" height="17" fill="rgb(148,148,148)"/><rect x="52" y="111" width="47" height="17" fill="rgb(89,89,89)"/><rect x="98" y="111" width="17" height="17" fill="rgb(92,92,92)"/><rect x="114" y="111" width="17" height="17" fill="rgb(97,97,97)"/><rect x="130" y="111" width="17" height="17" fill="rgb(120,120,120)"/><rect x="146" y="111" width="17" height="17" fill="rgb(135,135,135)"/><rect x="162" y="111" width="17" height="17" fill="rgb(125,125,125)"/><rect x="178" y="111" width="17" height="17" fill="rgb(97,97,97)"/><rect x="194" y="111" width="17" height="17" fill="rgb(97,97,97)"/><rect x="210" y="111" width="17" height="17" fill="rgb(97,97,97)"/><rect x="226" y="111" width="47" height="17" fill="rgb(97,97,97)"/><rect x="52" y="127" width="47" height="17" fill="rgb(89,89,89)"/><rect x="98" y="127" width="17" height="17" fill="rgb(92,92,92)"/><rect x="114" y="127" width="17" height="17" fill="rgb(102,102,102)"/><rect x="130" y="127" width="17" height="17" fill="rgb(120,120,120)"/><rect x="146" y="127" width="17" height="17" fill="rgb(130,130,130)"/><rect x="162" y="127" width="17" height="17" fill="rgb(122,122,122)"/><rect x="178" y="127" width="17" height="17" fill="rgb(115,115,115)"/><rect x="194" y="127" width="17" height="17" fill="rgb(115,115,115)"/><rect x="210" y="127" width="17" height="17" fill="rgb(115,115,115)"/><rect x="226" y="127" width="47" height="17" fill="rgb(115,115,115)"/><rect x="52" y="143" width="47" height="17" fill="rgb(89,89,89)"/><rect x="98" y="143" width="17" height="17" fill="rgb(92,92,92)"/><rect x="114" y="143" width="17" height="17" fill="rgb(102,102,102)"/><rect x="130" y="143" width="17" height="17" fill="rgb(115,115,115)"/><rect x="146" y="143" width="17" height="17" fill="rgb(125,125,125)"/><rect x="162" y="143" width="17" height="17" fill="rgb(125,125,125)"/><rect x="178" y="143" width="17" height="17" fill="rgb(125,125,125)"/><rect x="194" y="143" width="17" height="17" fill="rgb(125,125,125)"/><rect x="210" y="143" width="17" height="17" fill="rgb(125,125,125)"/><rect x="226" y="143" width="47" height="17" fill="rgb(125,125,125)"/><rect x="52" y="159" width="47" height="17" fill="rgb(87,87,87)"/><rect x="98" y="159" width="17" height="17" fill="rgb(92,92,92)"/><rect x="114" y="159" width="17" height="17" fill="rgb(99,99,99)"/><rect x="130" y="159" width="17" height="17" fill="rgb(112,112,112)"/><rect x="146" y="159" width="17" height="17" fill="rgb(120,120,120)"/><rect x="162" y="159" width="17" height="17" fill="rgb(122,122,122)"/><rect x="178" y="159" width="17" height="17" fill="rgb(145,145,145)"/><rect x="194" y="159" width="17" height="17" fill="rgb(145,145,145)"/><rect x="210" y="159" width="17" height="17" fill="rgb(145,145,145)"/><rect x="226" y="159" width="47" height="17" fill="rgb(145,145,145)"/><rect x="52" y="175" width="47" height="17" fill="rgb(89,89,89)"/><rect x="98" y="175" width="17" height="17" fill="rgb(92,92,92)"/><rect x="114" y="175" width="17" height="17" fill="rgb(97,97,97)"/><rect x="130" y="175" width="17" height="17" fill="rgb(102,102,102)"/><rect x="146" y="175" width="17" height="17" fill="rgb(110,110,110)"/><rect x="162" y="175" width="17" height="17" fill="rgb(117,117,117)"/><rect x="178" y="175" width="17" height="17" fill="rgb(145,145,145)"/><rect x="194" y="175" width="17" height="17" fill="rgb(145,145,145)"/><rect x="210" y="175" width="17" height="17" fill="rgb(145,145,145)"/><rect x="226" y="175" width="47" height="17" fill="rgb(145,145,145)"/><rect x="52" y="191" width="47" height="17" fill="rgb(74,74,74)"/><rect x="98" y="191" width="17" height="17" fill="rgb(79,79,79)"/><rect x="114" y="191" width="17" height="17" fill="rgb(84,84,84)"/><rect x="130" y="191" width="17" height="17" fill="rgb(89,89,89)"/><rect x="146" y="191" width="17" height="17" fill="rgb(89,89,89)"/><rect x="162" y="191" width="17" height="17" fill="rgb(97,97,97)"/><rect x="178" y="191" width="17" height="17" fill="rgb(120,120,120)"/><rect x="194" y="191" width="17" height="17" fill="rgb(125,125,125)"/><rect x="210" y="191" width="17" height="17" fill="rgb(125,125,125)"/><rect x="226" y="191" width="47" height="17" fill="rgb(125,125,125)"/><rect x="52" y="207" width="47" height="17" fill="rgb(74,74,74)"/><rect x="98" y="207" width="17" height="17" fill="rgb(76,76,76)"/><rect x="114" y="207" width="17" height="17" fill="rgb(82,82,82)"/><rect x="130" y="207" width="17" height="17" fill="rgb(89,89,89)"/><rect x="146" y="207" width="17" height="17" fill="rgb(92,92,92)"/><rect x="162" y="207" width="17" height="17" fill="rgb(97,97,97)"/><rect x="178" y="207" width="17" height="17" fill="rgb(117,117,117)"/><rect x="194" y="207" width="17" height="17" fill="rgb(122,122,122)"/><rect x="210" y="207" width="17" height="17" fill="rgb(122,122,122)"/><rect x="226" y="207" width="47" height="17" fill="rgb(122,122,122)"/><rect x="52" y="223" width="47" height="17" fill="rgb(74,74,74)"/><rect x="98" y="223" width="17" height="17" fill="rgb(76,76,76)"/><rect x="114" y="223" width="17" height="17" fill="rgb(82,82,82)"/><rect x="130" y="223" width="17" height="17" fill="rgb(89,89,89)"/><rect x="146" y="223" width="17" height="17" fill="rgb(92,92,92)"/><rect x="162" y="223" width="17" height="17" fill="rgb(97,97,97)"/><rect x="178" y="223" width="17" height="17" fill="rgb(115,115,115)"/><rect x="194" y="223" width="17" height="17" fill="rgb(120,120,120)"/><rect x="210" y="223" width="17" height="17" fill="rgb(120,120,120)"/><rect x="226" y="223" width="47" height="17" fill="rgb(120,120,120)"/><rect x="52" y="239" width="47" height="17" fill="rgb(79,79,79)"/><rect x="98" y="239" width="17" height="17" fill="rgb(79,79,79)"/><rect x="114" y="239" width="17" height="17" fill="rgb(92,92,92)"/><rect x="130" y="239" width="17" height="17" fill="rgb(94,94,94)"/><rect x="146" y="239" width="17" height="17" fill="rgb(94,94,94)"/><rect x="162" y="239" width="17" height="17" fill="rgb(99,99,99)"/><rect x="178" y="239" width="17" height="17" fill="rgb(115,115,115)"/><rect x="194" y="239" width="17" height="17" fill="rgb(122,122,122)"/><rect x="210" y="239" width="17" height="17" fill="rgb(122,122,122)"/><rect x="226" y="239" width="47" height="17" fill="rgb(122,122,122)"/><rect x="52" y="255" width="47" height="17" fill="rgb(76,76,76)"/><rect x="98" y="255" width="17" height="17" fill="rgb(76,76,76)"/><rect x="114" y="255" width="17" height="17" fill="rgb(99,99,99)"/><rect x="130" y="255" width="17" height="17" fill="rgb(97,97,97)"/><rect x="146" y="255" width="17" height="17" fill="rgb(92,92,92)"/><rect x="162" y="255" width="17" height="17" fill="rgb(97,97,97)"/><rect x="178" y="255" width="17" height="17" fill="rgb(115,115,115)"/><rect x="194" y="255" width="17" height="17" fill="rgb(125,125,125)"/><rect x="210" y="255" width="17" height="17" fill="rgb(125,125,125)"/><rect x="226" y="255" width="47" height="17" fill="rgb(125,125,125)"/><rect x="52" y="271" width="47" height="17" fill="rgb(105,105,105)"/><rect x="98" y="271" width="17" height="17" fill="rgb(102,102,102)"/><rect x="114" y="271" width="17" height="17" fill="rgb(102,102,102)"/><rect x="130" y="271" width="17" height="17" fill="rgb(92,92,92)"/><rect x="146" y="271" width="17" height="17" fill="rgb(89,89,89)"/><rect x="162" y="271" width="17" height="17" fill="rgb(97,97,97)"/><rect x="178" y="271" width="17" height="17" fill="rgb(115,115,115)"/><rect x="194" y="271" width="17" height="17" fill="rgb(125,125,125)"/><rect x="210" y="271" width="17" height="17" fill="rgb(125,125,125)"/><rect x="226" y="271" width="47" height="17" fill="rgb(125,125,125)"/><rect x="52" y="287" width="47" height="17" fill="rgb(112,112,112)"/><rect x="98" y="287" width="17" height="17" fill="rgb(110,110,110)"/><rect x="114" y="287" width="17" height="17" fill="rgb(102,102,102)"/><rect x="130" y="287" width="17" height="17" fill="rgb(92,92,92)"/><rect x="146" y="287" width="17" height="17" fill="rgb(92,92,92)"/><rect x="162" y="287" width="17" height="17" fill="rgb(97,97,97)"/><rect x="178" y="287" width="17" height="17" fill="rgb(107,107,107)"/><rect x="194" y="287" width="17" height="17" fill="rgb(117,117,117)"/><rect x="210" y="287" width="17" height="17" fill="rgb(117,117,117)"/><rect x="226" y="287" width="47" height="17" fill="rgb(117,117,117)"/><rect x="52" y="303" width="47" height="17" fill="rgb(99,99,99)"/><rect x="98" y="303" width="17" height="17" fill="rgb(89,89,89)"/><rect x="114" y="303" width="17" height="17" fill="rgb(87,87,87)"/><rect x="130" y="303" width="17" height="17" fill="rgb(92,92,92)"/><rect x="146" y="303" width="17" height="17" fill="rgb(94,94,94)"/><rect x="162" y="303" width="17" height="17" fill="rgb(99,99,99)"/><rect x="178" y="303" width="17" height="17" fill="rgb(105,105,105)"/><rect x="194" y="303" width="17" height="17" fill="rgb(115,115,115)"/><rect x="210" y="303" width="17" height="17" fill="rgb(115,115,115)"/><rect x="226" y="303" width="47" height="17" fill="rgb(115,115,115)"/><rect x="52" y="319" width="47" height="17" fill="rgb(84,84,84)"/><rect x="98" y="319" width="17" height="17" fill="rgb(76,76,76)"/><rect x="114" y="319" width="17" height="17" fill="rgb(79,79,79)"/><rect x="130" y="319" width="17" height="17" fill="rgb(92,92,92)"/><rect x="146" y="319" width="17" height="17" fill="rgb(97,97,97)"/><rect x="162" y="319" width="17" height="17" fill="rgb(102,102,102)"/><rect x="178" y="319" width="17" height="17" fill="rgb(102,102,102)"/><rect x="194" y="319" width="17" height="17" fill="rgb(115,115,115)"/><rect x="210" y="319" width="17" height="17" fill="rgb(115,115,115)"/><rect x="226" y="319" width="47" height="17" fill="rgb(115,115,115)"/><rect x="52" y="335" width="47" height="17" fill="rgb(74,74,74)"/><rect x="98" y="335" width="17" height="17" fill="rgb(74,74,74)"/><rect x="114" y="335" width="17" height="17" fill="rgb(76,76,76)"/><rect x="130" y="335" width="17" height="17" fill="rgb(87,87,87)"/><rect x="146" y="335" width="17" height="17" fill="rgb(97,97,97)"/><rect x="162" y="335" width="17" height="17" fill="rgb(102,102,102)"/><rect x="178" y="335" width="17" height="17" fill="rgb(102,102,102)"/><rect x="194" y="335" width="17" height="17" fill="rgb(112,112,112)"/><rect x="210" y="335" width="17" height="17" fill="rgb(112,112,112)"/><rect x="226" y="335" width="47" height="17" fill="rgb(112,112,112)"/><rect x="52" y="351" width="47" height="17" fill="rgb(89,89,89)"/><rect x="98" y="351" width="17" height="17" fill="rgb(82,82,82)"/><rect x="114" y="351" width="17" height="17" fill="rgb(79,79,79)"/><rect x="130" y="351" width="17" height="17" fill="rgb(87,87,87)"/><rect x="146" y="351" width="17" height="17" fill="rgb(97,97,97)"/><rect x="162" y="351" width="17" height="17" fill="rgb(99,99,99)"/><rect x="178" y="351" width="17" height="17" fill="rgb(105,105,105)"/><rect x="194" y="351" width="17" height="17" fill="rgb(110,110,110)"/><rect x="210" y="351" width="17" height="17" fill="rgb(120,120,120)"/><rect x="226" y="351" width="47" height="17" fill="rgb(120,120,120)"/><rect x="52" y="367" width="47" height="17" fill="rgb(89,89,89)"/><rect x="98" y="367" width="17" height="17" fill="rgb(82,82,82)"/><rect x="114" y="367" width="17" height="17" fill="rgb(82,82,82)"/><rect x="130" y="367" width="17" height="17" fill="rgb(87,87,87)"/><rect x="146" y="367" width="17" height="17" fill="rgb(97,97,97)"/><rect x="162" y="367" width="17" height="17" fill="rgb(102,102,102)"/><rect x="178" y="367" width="17" height="17" fill="rgb(112,112,112)"/><rect x="194" y="367" width="17" height="17" fill="rgb(107,107,107)"/><rect x="210" y="367" width="17" height="17" fill="rgb(112,112,112)"/><rect x="226" y="367" width="47" height="17" fill="rgb(112,112,112)"/><rect x="52" y="383" width="47" height="17" fill="rgb(97,97,97)"/><rect x="98" y="383" width="17" height="17" fill="rgb(97,97,97)"/><rect x="114" y="383" width="17" height="17" fill="rgb(97,97,97)"/><rect x="130" y="383" width="17" height="17" fill="rgb(102,102,102)"/><rect x="146" y="383" width="17" height="17" fill="rgb(107,107,107)"/><rect x="162" y="383" width="17" height="17" fill="rgb(112,112,112)"/><rect x="178" y="383" width="17" height="17" fill="rgb(122,122,122)"/><rect x="194" y="383" width="17" height="17" fill="rgb(112,112,112)"/><rect x="210" y="383" width="17" height="17" fill="rgb(117,117,117)"/><rect x="226" y="383" width="47" height="17" fill="rgb(117,117,117)"/><rect x="52" y="399" width="47" height="17" fill="rgb(89,89,89)"/><rect x="98" y="399" width="17" height="17" fill="rgb(89,89,89)"/><rect x="114" y="399" width="17" height="17" fill="rgb(94,94,94)"/><rect x="130" y="399" width="17" height="17" fill="rgb(102,102,102)"/><rect x="146" y="399" width="17" height="17" fill="rgb(107,107,107)"/><rect x="162" y="399" width="17" height="17" fill="rgb(117,117,117)"/><rect x="178" y="399" width="17" height="17" fill="rgb(128,128,128)"/><rect x="194" y="399" width="17" height="17" fill="rgb(122,122,122)"/><rect x="210" y="399" width="17" height="17" fill="rgb(128,128,128)"/><rect x="226" y="399" width="47" height="17" fill="rgb(128,128,128)"/><rect x="52" y="415" width="47" height="17" fill="rgb(76,76,76)"/><rect x="98" y="415" width="17" height="17" fill="rgb(87,87,87)"/><rect x="114" y="415" width="17" height="17" fill="rgb(97,97,97)"/><rect x="130" y="415" width="17" height="17" fill="rgb(112,112,112)"/><rect x="146" y="415" width="17" height="17" fill="rgb(107,107,107)"/><rect x="162" y="415" width="17" height="17" fill="rgb(117,117,117)"/><rect x="178" y="415" width="17" height="17" fill="rgb(117,117,117)"/><rect x="194" y="415" width="17" height="17" fill="rgb(122,122,122)"/><rect x="210" y="415" width="17" height="17" fill="rgb(122,122,122)"/><rect x="226" y="415" width="47" height="17" fill="rgb(122,122,122)"/><rect x="52" y="431" width="47" height="17" fill="rgb(61,61,61)"/><rect x="98" y="431" width="17" height="17" fill="rgb(66,66,66)"/><rect x="114" y="431" width="17" height="17" fill="rgb(82,82,82)"/><rect x="130" y="431" width="17" height="17" fill="rgb(92,92,92)"/><rect x="146" y="431" width="17" height="17" fill="rgb(97,97,97)"/><rect x="162" y="431" width="17" height="17" fill="rgb(115,115,115)"/><rect x="178" y="431" width="17" height="17" fill="rgb(128,128,128)"/><rect x="194" y="431" width="17" height="17" fill="rgb(117,117,117)"/><rect x="210" y="431" width="17" height="17" fill="rgb(163,163,163)"/><rect x="226" y="431" width="47" height="17" fill="rgb(163,163,163)"/><rect x="52" y="447" width="47" height="17" fill="rgb(51,51,51)"/><rect x="98" y="447" width="17" height="17" fill="rgb(56,56,56)"/><rect x="114" y="447" width="17" height="17" fill="rgb(82,82,82)"/><rect x="130" y="447" width="17" height="17" fill="rgb(94,94,94)"/><rect x="146" y="447" width="17" height="17" fill="rgb(97,97,97)"/><rect x="162" y="447" width="17" height="17" fill="rgb(107,107,107)"/><rect x="178" y="447" width="17" height="17" fill="rgb(102,102,102)"/><rect x="194" y="447" width="17" height="17" fill="rgb(107,107,107)"/><rect x="210" y="447" width="17" height="17" fill="rgb(158,158,158)"/><rect x="226" y="447" width="47" height="17" fill="rgb(158,158,158)"/><rect x="52" y="463" width="47" height="17" fill="rgb(48,48,48)"/><rect x="98" y="463" width="17" height="17" fill="rgb(54,54,54)"/><rect x="114" y="463" width="17" height="17" fill="rgb(76,76,76)"/><rect x="130" y="463" width="17" height="17" fill="rgb(89,89,89)"/><rect x="146" y="463" width="17" height="17" fill="rgb(107,107,107)"/><rect x="162" y="463" width="17" height="17" fill="rgb(110,110,110)"/><rect x="178" y="463" width="17" height="17" fill="rgb(107,107,107)"/><rect x="194" y="463" width="17" height="17" fill="rgb(107,107,107)"/><rect x="210" y="463" width="17" height="17" fill="rgb(138,138,138)"/><rect x="226" y="463" width="47" height="17" fill="rgb(138,138,138)"/><rect x="52" y="479" width="47" height="17" fill="rgb(48,48,48)"/><rect x="98" y="479" width="17" height="17" fill="rgb(54,54,54)"/><rect x="114" y="479" width="17" height="17" fill="rgb(66,66,66)"/><rect x="130" y="479" width="17" height="17" fill="rgb(76,76,76)"/><rect x="146" y="479" width="17" height="17" fill="rgb(69,69,69)"/><rect x="162" y="479" width="17" height="17" fill="rgb(92,92,92)"/><rect x="178" y="479" width="17" height="17" fill="rgb(107,107,107)"/><rect x="194" y="479" width="17" height="17" fill="rgb(110,110,110)"/><rect x="210" y="479" width="17" height="17" fill="rgb(138,138,138)"/><rect x="226" y="479" width="47" height="17" fill="rgb(138,138,138)"/><rect x="52" y="495" width="47" height="17" fill="rgb(54,54,54)"/><rect x="98" y="495" width="17" height="17" fill="rgb(61,61,61)"/><rect x="114" y="495" width="17" height="17" fill="rgb(66,66,66)"/><rect x="130" y="495" width="17" height="17" fill="rgb(71,71,71)"/><rect x="146" y="495" width="17" height="17" fill="rgb(66,66,66)"/><rect x="162" y="495" width="17" height="17" fill="rgb(66,66,66)"/><rect x="178" y="495" width="17" height="17" fill="rgb(76,76,76)"/><rect x="194" y="495" width="17" height="17" fill="rgb(92,92,92)"/><rect x="210" y="495" width="17" height="17" fill="rgb(143,143,143)"/><rect x="226" y="495" width="47" height="17" fill="rgb(143,143,143)"/><rect x="52" y="511" width="47" height="17" fill="rgb(61,61,61)"/><rect x="98" y="511" width="17" height="17" fill="rgb(92,92,92)"/><rect x="114" y="511" width="17" height="17" fill="rgb(76,76,76)"/><rect x="130" y="511" width="17" height="17" fill="rgb(66,66,66)"/><rect x="146" y="511" width="17" height="17" fill="rgb(66,66,66)"/><rect x="162" y="511" width="17" height="17" fill="rgb(66,66,66)"/><rect x="178" y="511" width="17" height="17" fill="rgb(76,76,76)"/><rect x="194" y="511" width="17" height="17" fill="rgb(87,87,87)"/><rect x="210" y="511" width="17" height="17" fill="rgb(117,117,117)"/><rect x="226" y="511" width="47" height="17" fill="rgb(117,117,117)"/><rect x="52" y="527" width="47" height="17" fill="rgb(102,102,102)"/><rect x="98" y="527" width="17" height="17" fill="rgb(107,107,107)"/><rect x="114" y="527" width="17" height="17" fill="rgb(82,82,82)"/><rect x="130" y="527" width="17" height="17" fill="rgb(66,66,66)"/><rect x="146" y="527" width="17" height="17" fill="rgb(66,66,66)"/><rect x="162" y="527" width="17" height="17" fill="rgb(102,102,102)"/><rect x="178" y="527" width="17" height="17" fill="rgb(84,84,84)"/><rect x="194" y="527" width="17" height="17" fill="rgb(87,87,87)"/><rect x="210" y="527" width="17" height="17" fill="rgb(102,102,102)"/><rect x="226" y="527" width="47" height="17" fill="rgb(128,128,128)"/><rect x="52" y="543" width="47" height="17" fill="rgb(112,112,112)"/><rect x="98" y="543" width="17" height="17" fill="rgb(112,112,112)"/><rect x="114" y="543" width="17" height="17" fill="rgb(92,92,92)"/><rect x="130" y="543" width="17" height="17" fill="rgb(107,107,107)"/><rect x="146" y="543" width="17" height="17" fill="rgb(76,76,76)"/><rect x="162" y="543" width="17" height="17" fill="rgb(97,97,97)"/><rect x="178" y="543" width="17" height="17" fill="rgb(92,92,92)"/><rect x="194" y="543" width="17" height="17" fill="rgb(89,89,89)"/><rect x="210" y="543" width="17" height="17" fill="rgb(115,115,115)"/><rect x="226" y="543" width="47" height="17" fill="rgb(107,107,107)"/><rect x="52" y="559" width="47" height="17" fill="rgb(112,112,112)"/><rect x="98" y="559" width="17" height="17" fill="rgb(122,122,122)"/><rect x="114" y="559" width="17" height="17" fill="rgb(87,87,87)"/><rect x="130" y="559" width="17" height="17" fill="rgb(107,107,107)"/><rect x="146" y="559" width="17" height="17" fill="rgb(138,138,138)"/><rect x="162" y="559" width="17" height="17" fill="rgb(92,92,92)"/><rect x="178" y="559" width="17" height="17" fill="rgb(138,138,138)"/><rect x="194" y="559" width="17" height="17" fill="rgb(107,107,107)"/><rect x="210" y="559" width="17" height="17" fill="rgb(148,148,148)"/><rect x="226" y="559" width="47" height="17" fill="rgb(148,148,148)"/><rect x="52" y="575" width="47" height="17" fill="rgb(122,122,122)"/><rect x="98" y="575" width="17" height="17" fill="rgb(117,117,117)"/><rect x="114" y="575" width="17" height="17" fill="rgb(87,87,87)"/><rect x="130" y="575" width="17" height="17" fill="rgb(97,97,97)"/><rect x="146" y="575" width="17" height="17" fill="rgb(143,143,143)"/><rect x="162" y="575" width="17" height="17" fill="rgb(107,107,107)"/><rect x="178" y="575" width="17" height="17" fill="rgb(102,102,102)"/><rect x="194" y="575" width="17" height="17" fill="rgb(107,107,107)"/><rect x="210" y="575" width="17" height="17" fill="rgb(112,112,112)"/><rect x="226" y="575" width="47" height="17" fill="rgb(112,112,112)"/><rect x="52" y="591" width="47" height="17" fill="rgb(112,112,112)"/><rect x="98" y="591" width="17" height="17" fill="rgb(133,133,133)"/><rect x="114" y="591" width="17" height="17" fill="rgb(153,153,153)"/><rect x="130" y="591" width="17" height="17" fill="rgb(122,122,122)"/><rect x="146" y="591" width="17" height="17" fill="rgb(92,92,92)"/><rect x="162" y="591" width="17" height="17" fill="rgb(128,128,128)"/><rect x="178" y="591" width="17" height="17" fill="rgb(112,112,112)"/><rect x="194" y="591" width="17" height="17" fill="rgb(112,112,112)"/><rect x="210" y="591" width="17" height="17" fill="rgb(97,97,97)"/><rect x="226" y="591" width="47" height="17" fill="rgb(97,97,97)"/><rect x="52" y="607" width="47" height="17" fill="rgb(87,87,87)"/><rect x="98" y="607" width="17" height="17" fill="rgb(122,122,122)"/><rect x="114" y="607" width="17" height="17" fill="rgb(158,158,158)"/><rect x="130" y="607" width="17" height="17" fill="rgb(148,148,148)"/><rect x="146" y="607" width="17" height="17" fill="rgb(102,102,102)"/><rect x="162" y="607" width="17" height="17" fill="rgb(107,107,107)"/><rect x="178" y="607" width="17" height="17" fill="rgb(120,120,120)"/><rect x="194" y="607" width="17" height="17" fill="rgb(107,107,107)"/><rect x="210" y="607" width="17" height="17" fill="rgb(92,92,92)"/><rect x="226" y="607" width="47" height="17" fill="rgb(92,92,92)"/><rect x="52" y="623" width="47" height="17" fill="rgb(51,51,51)"/><rect x="98" y="623" width="17" height="17" fill="rgb(122,122,122)"/><rect x="114" y="623" width="17" height="17" fill="rgb(138,138,138)"/><rect x="130" y="623" width="17" height="17" fill="rgb(153,153,153)"/><rect x="146" y="623" width="17" height="17" fill="rgb(156,156,156)"/><rect x="162" y="623" width="17" height="17" fill="rgb(143,143,143)"/><rect x="178" y="623" width="17" height="17" fill="rgb(112,112,112)"/><rect x="194" y="623" width="17" height="17" fill="rgb(122,122,122)"/><rect x="210" y="623" width="17" height="17" fill="rgb(112,112,112)"/><rect x="226" y="623" width="47" height="17" fill="rgb(112,112,112)"/><rect x="52" y="639" width="47" height="17" fill="rgb(48,48,48)"/><rect x="98" y="639" width="17" height="17" fill="rgb(97,97,97)"/><rect x="114" y="639" width="17" height="17" fill="rgb(135,135,135)"/><rect x="130" y="639" width="17" height="17" fill="rgb(138,138,138)"/><rect x="146" y="639" width="17" height="17" fill="rgb(150,150,150)"/><rect x="162" y="639" width="17" height="17" fill="rgb(143,143,143)"/><rect x="178" y="639" width="17" height="17" fill="rgb(133,133,133)"/><rect x="194" y="639" width="17" height="17" fill="rgb(128,128,128)"/><rect x="210" y="639" width="17" height="17" fill="rgb(128,128,128)"/><rect x="226" y="639" width="47" height="17" fill="rgb(128,128,128)"/><rect x="52" y="655" width="47" height="17" fill="rgb(54,54,54)"/><rect x="98" y="655" width="17" height="17" fill="rgb(69,69,69)"/><rect x="114" y="655" width="17" height="17" fill="rgb(122,122,122)"/><rect x="130" y="655" width="17" height="17" fill="rgb(135,135,135)"/><rect x="146" y="655" width="17" height="17" fill="rgb(143,143,143)"/><rect x="162" y="655" width="17" height="17" fill="rgb(133,133,133)"/><rect x="178" y="655" width="17" height="17" fill="rgb(138,138,138)"/><rect x="194" y="655" width="17" height="17" fill="rgb(128,128,128)"/><rect x="210" y="655" width="17" height="17" fill="rgb(122,122,122)"/><rect x="226" y="655" width="47" height="17" fill="rgb(122,122,122)"/><rect x="52" y="671" width="47" height="17" fill="rgb(66,66,66)"/><rect x="98" y="671" width="17" height="17" fill="rgb(71,71,71)"/><rect x="114" y="671" width="17" height="17" fill="rgb(82,82,82)"/><rect x="130" y="671" width="17" height="17" fill="rgb(133,133,133)"/><rect x="146" y="671" width="17" height="17" fill="rgb(117,117,117)"/><rect x="162" y="671" width="17" height="17" fill="rgb(138,138,138)"/><rect x="178" y="671" width="17" height="17" fill="rgb(122,122,122)"/><rect x="194" y="671" width="17" height="17" fill="rgb(112,112,112)"/><rect x="210" y="671" width="17" height="17" fill="rgb(138,138,138)"/><rect x="226" y="671" width="47" height="17" fill="rgb(138,138,138)"/><rect x="52" y="687" width="47" height="17" fill="rgb(76,76,76)"/><rect x="98" y="687" width="17" height="17" fill="rgb(76,76,76)"/><rect x="114" y="687" width="17" height="17" fill="rgb(66,66,66)"/><rect x="130" y="687" width="17" height="17" fill="rgb(117,117,117)"/><rect x="146" y="687" width="17" height="17" fill="rgb(102,102,102)"/><rect x="162" y="687" width="17" height="17" fill="rgb(94,94,94)"/><rect x="178" y="687" width="17" height="17" fill="rgb(107,107,107)"/><rect x="194" y="687" width="17" height="17" fill="rgb(153,153,153)"/><rect x="210" y="687" width="17" height="17" fill="rgb(128,128,128)"/><rect x="226" y="687" width="47" height="17" fill="rgb(128,128,128)"/><rect x="52" y="703" width="47" height="17" fill="rgb(97,97,97)"/><rect x="98" y="703" width="17" height="17" fill="rgb(82,82,82)"/><rect x="114" y="703" width="17" height="17" fill="rgb(66,66,66)"/><rect x="130" y="703" width="17" height="17" fill="rgb(107,107,107)"/><rect x="146" y="703" width="17" height="17" fill="rgb(97,97,97)"/><rect x="162" y="703" width="17" height="17" fill="rgb(84,84,84)"/><rect x="178" y="703" width="17" height="17" fill="rgb(97,97,97)"/><rect x="194" y="703" width="17" height="17" fill="rgb(173,173,173)"/><rect x="210" y="703" width="17" height="17" fill="rgb(133,133,133)"/><rect x="226" y="703" width="47" height="17" fill="rgb(148,148,148)"/><rect x="52" y="719" width="47" height="47" fill="rgb(117,117,117)"/><rect x="98" y="719" width="17" height="47" fill="rgb(112,112,112)"/><rect x="114" y="719" width="17" height="47" fill="rgb(97,97,97)"/><rect x="130" y="719" width="17" height="47" fill="rgb(117,117,117)"/><rect x="146" y="719" width="17" height="47" fill="rgb(112,112,112)"/><rect x="162" y="719" width="17" height="47" fill="rgb(97,97,97)"/><rect x="178" y="719" width="17" height="47" fill="rgb(117,117,117)"/><rect x="194" y="719" width="17" height="47" fill="rgb(163,163,163)"/><rect x="210" y="719" width="17" height="47" fill="rgb(122,122,122)"/><rect x="226" y="719" width="47" height="47" fill="rgb(133,133,133)"/></g></g></g></g>
</g></g>
<g fill="#8a2be2"><rect x="190" y="47" width="12.5" height="54.5"/><path d="M190 126H202V128H214.5V140H215V151H190Z"/><rect x="190" y="163" width="24.7" height="14"/></g>
<rect x="215" y="534" width="12" height="11" fill="#ffa500"/><rect x="215" y="545" width="12" height="12" fill="#ffe600"/>
<g stroke="#00ffff" stroke-width="1" shape-rendering="crispEdges" fill="none">
<line x1="79" y1="65.5" x2="128.8" y2="65.5"/>
<line x1="157.4" y1="65.5" x2="190" y2="65.5"/>
<line x1="218" y1="65.5" x2="251.4" y2="65.5"/>
<line x1="280.7" y1="65.5" x2="317" y2="65.5"/>
<line x1="340.4" y1="65.5" x2="378.8" y2="65.5"/>
<line x1="402.3" y1="65.5" x2="437.7" y2="65.5"/>
<line x1="452.3" y1="65.5" x2="499" y2="65.5"/>
<line x1="527.3" y1="65.5" x2="560.6" y2="65.5"/>
<line x1="589" y1="65.5" x2="618.7" y2="65.5"/>
<line x1="651.6" y1="65.5" x2="681.2" y2="65.5"/>
<line x1="713.5" y1="65.5" x2="743" y2="65.5"/>
<line x1="775.3" y1="65.5" x2="804.3" y2="65.5"/>
<line x1="837.2" y1="65.5" x2="863" y2="65.5"/>
<line x1="900.4" y1="65.5" x2="944" y2="65.5"/>
<line x1="79" y1="127.5" x2="873.8" y2="127.5"/>
<line x1="895.8" y1="127.5" x2="944" y2="127.5"/>
<line x1="79" y1="188.5" x2="867.8" y2="188.5"/>
<line x1="889.7" y1="188.5" x2="944" y2="188.5"/>
<line x1="79" y1="250.5" x2="871.2" y2="250.5"/>
<line x1="898.6" y1="250.5" x2="944" y2="250.5"/>
<line x1="79" y1="312.5" x2="868.3" y2="312.5"/>
<line x1="899.1" y1="312.5" x2="944" y2="312.5"/>
<line x1="79" y1="374.5" x2="867.8" y2="374.5"/>
<line x1="902" y1="374.5" x2="944" y2="374.5"/>
<line x1="79" y1="435.5" x2="867.8" y2="435.5"/>
<line x1="902" y1="435.5" x2="944" y2="435.5"/>
<line x1="79" y1="497.5" x2="867.8" y2="497.5"/>
<line x1="902" y1="497.5" x2="944" y2="497.5"/>
<line x1="79" y1="559.5" x2="867.7" y2="559.5"/>
<line x1="902.2" y1="559.5" x2="944" y2="559.5"/>
<line x1="79" y1="621.5" x2="864.9" y2="621.5"/>
<line x1="904.9" y1="621.5" x2="944" y2="621.5"/>
<line x1="79" y1="682.5" x2="864.9" y2="682.5"/>
<line x1="904.9" y1="682.5" x2="944" y2="682.5"/>
<line x1="79.5" y1="65" x2="79.5" y2="683"/>
<line x1="141.5" y1="71" x2="141.5" y2="683"/>
<line x1="202.5" y1="71" x2="202.5" y2="683"/>
<line x1="264.5" y1="71" x2="264.5" y2="683"/>
<line x1="326.5" y1="71" x2="326.5" y2="683"/>
<line x1="388.5" y1="71" x2="388.5" y2="683"/>
<line x1="449.5" y1="71" x2="449.5" y2="683"/>
<line x1="511.5" y1="71" x2="511.5" y2="683"/>
<line x1="573.5" y1="71" x2="573.5" y2="683"/>
<line x1="634.5" y1="71" x2="634.5" y2="683"/>
<line x1="696.5" y1="71" x2="696.5" y2="683"/>
<line x1="758.5" y1="71" x2="758.5" y2="683"/>
<line x1="820.5" y1="71" x2="820.5" y2="683"/>
<line x1="881.5" y1="71" x2="881.5" y2="120"/>
<line x1="881.5" y1="131" x2="881.5" y2="181"/>
<line x1="881.5" y1="192" x2="881.5" y2="243"/>
<line x1="881.5" y1="254" x2="881.5" y2="305"/>
<line x1="881.5" y1="316" x2="881.5" y2="367"/>
<line x1="881.5" y1="378" x2="881.5" y2="428"/>
<line x1="881.5" y1="439" x2="881.5" y2="490"/>
<line x1="881.5" y1="501" x2="881.5" y2="552"/>
<line x1="881.5" y1="563" x2="881.5" y2="614"/>
<line x1="881.5" y1="625" x2="881.5" y2="675"/>
<line x1="943.5" y1="65" x2="943.5" y2="683"/>
</g>
<g stroke="#ffffff" stroke-width="1" fill="none" shape-rendering="crispEdges" stroke-linejoin="round">
<polyline points="258.4,44.8 258.5,47.0 261.0,48.0 260.0,50.5 263.0,51.0 264.0,53.5 266.8,53.5 267.0,56.0 270.2,56.5 270.2,58.6"/>
<polyline points="280.3,66.2 283.0,69.0 285.4,73.7 286.0,79.0 287.9,84.7 286.0,86.0 289.0,88.0 290.5,92.0 292.9,95.6 296.0,97.0 303.9,100.3 310.0,106.0 317.4,111.6 324.9,115.0 331.0,121.0 337.6,126.8 342.0,129.5 347.7,132.3 356.4,135.5 362.0,133.0 367.9,130.2 378.0,126.5 385.0,125.3 393.2,124.3 400.0,124.5 410.0,125.6 416.0,126.2 421.0,128.4 424.4,130.4 427.8,127.9 430.3,126.2 440.4,123.7 448.8,118.6 460.6,116.9 464.8,112.7 475.8,110.5 490.9,109.7 506.1,110.2 511.2,115.3 516.2,122.0 517.0,127.9 524.6,135.5 534.7,134.6 537.0,133.4 539.8,134.2 546.9,132.7 552.0,131.0 552.8,128.2 554.0,131.0 556.2,132.7 559.6,132.7 560.4,136.9 565.5,140.0 568.8,138.6 569.7,144.5 572.5,149.6 571.4,158.8 570.2,167.3 565.5,174.0 568.8,176.5 566.3,181.6 567.2,186.6 572.5,187.1 565.1,187.8 564.6,194.2 558.7,200.1 561.0,205.0 564.6,211.1 569.5,219.3 576.2,226.0 585.5,235.3 595.6,244.5 597.3,250.4 600.3,254.6 599.8,259.7 603.2,263.0 609.0,261.4 609.4,263.0 602.3,264.7 608.2,274.0 611.6,284.1 615.5,292.9 614.1,296.7 610.4,301.0 612.4,307.7 615.8,313.6 619.2,319.5 620.5,326.7 619.5,336.8 616.6,342.7 611.6,345.3 609.0,350.3 604.8,353.7 604.0,361.3 601.5,368.8 599.0,377.3 598.1,382.3 594.7,384.8 595.6,397.5 594.4,408.4 598.1,417.3 602.3,420.7 607.4,430.3 612.8,438.4 615.4,446.8 623.8,459.5 628.8,465.4 629.3,471.3 627.7,474.1 628.5,488.1 632.2,494.0 633.6,504.1 633.9,510.0 636.4,515.9 639.0,526.0 644.0,535.3 652.7,541.8 658.6,549.4 661.2,558.6 665.4,567.0 670.4,574.6 675.1,580.5 676.3,588.9 674.1,593.2 670.4,593.7 671.3,597.4 677.2,604.1 677.7,607.5 675.1,609.2 682.2,610.0 683.6,612.9 688.1,614.2 692.3,617.9 697.4,617.9 702.4,613.9 709.2,612.9 712.5,614.2 718.4,612.9 723.5,609.2 729.4,608.3 734.4,609.2 741.2,608.0 750.4,610.0 755.5,611.2 758.0,608.3 765.6,609.2 768.1,605.8 779.0,605.0 785.2,601.9 789.4,600.2 797.8,593.5 801.2,591.8 806.2,586.7 812.9,580.0 820.5,575.5 828.1,566.5 831.5,559.0 836.5,550.5 843.3,545.1 850.0,540.4 852.5,532.8 855.1,522.7 856.4,513.5 852.5,510.9 853.7,505.9 857.6,502.0 860.7,500.3 867.5,498.3"/>
<polyline points="886.0,490.2 888.5,486.0 886.8,481.8 888.2,474.2 888.2,462.4 885.2,455.7 882.6,448.1 879.3,443.9 876.7,438.8"/>
<polyline points="886.8,427.9 891.9,423.7 897.8,422.0 901.2,417.8 905.4,412.7 911.3,406.8 919.7,402.6 931.5,399.3 938.2,395.0 942.4,390.0 950.0,380.3"/>
<polyline points="950.0,317.5 941.6,311.3 937.4,300.3 935.2,291.9 942.4,285.5 938.2,286.8 934.8,282.6 939.0,275.9 933.2,270.0 929.8,267.9 929.0,262.0 932.3,254.4 933.2,247.7 939.0,241.8 943.3,232.5 945.0,224.1 948.3,220.4 950.0,220.0"/>
<polyline points="940.0,249.5 941.6,252.0 941.2,256.0 939.8,253.0 940.0,249.5"/>
<polyline points="933.5,261.0 936.0,262.5 938.0,267.0 936.0,268.0 933.5,264.5 933.5,261.0"/>
<polyline points="554.5,146.2 557.9,142.0 560.4,142.8 557.9,149.6 555.5,148.5 554.5,146.2"/>
<polyline points="529.3,186.0 531.0,183.3 533.5,184.5 532.0,187.5 529.8,187.5 529.3,186.0"/>
<polyline points="558.0,199.0 559.5,197.5 561.0,199.0 559.5,201.0 558.0,199.0"/>
<polyline points="846.3,189.1 849.1,187.7 852.4,185.4 854.7,187.3 858.0,186.8 859.4,182.1 860.5,185.5 861.7,184.0 862.2,187.3 865.0,184.5 867.8,186.8"/>
<polyline points="880.9,192.2 877.6,192.9 874.8,192.4 872.5,193.3 870.6,196.6 871.5,199.9 869.7,203.6 867.8,205.9 869.2,206.9 865.9,207.8 865.9,210.1 869.7,212.5 865.5,211.5 867.3,215.7 865.5,217.6 862.7,220.4 860.8,218.6 857.1,219.0 855.2,220.9 857.1,224.2 854.7,224.6 854.5,227.4 853.8,224.2 854.5,220.9 852.4,218.6 850.5,216.7 849.6,218.1 846.8,217.6 846.3,220.4 844.0,220.9 844.5,223.7 841.7,222.8 842.6,220.9 840.3,216.7 840.7,212.0 841.7,205.9 843.5,202.2 841.2,198.0 842.6,194.3 845.4,191.9 844.0,190.1 846.3,189.1"/>
<polyline points="855.2,212.0 858.0,214.5 860.0,212.5 862.0,215.0 864.0,212.5 865.5,214.0"/>
<polyline points="856.0,213.5 859.0,215.5 861.5,214.0 863.5,215.7"/>
<polyline points="850.0,195.5 852.0,193.3"/>
<polyline points="846.8,192.4 848.5,193.5 847.5,195.2"/>
<polyline points="826.2,176.1 825.4,171.9 831.3,165.2 838.8,157.6 839.2,161.0 836.3,166.8 828.7,175.3 826.2,176.1"/>
<polyline points="893.9,131.8 892.9,142.5 895.3,150.0 899.5,153.4 902.7,158.9 903.6,154.0 900.3,150.0 897.8,142.5 897.8,132.8 893.9,131.8"/>
<polyline points="809.4,230.5 812.7,230.5 813.6,239.3 816.1,249.4 817.8,257.8 820.3,262.8 821.2,270.0 823.7,270.0 827.0,275.9 830.4,286.0 835.5,295.3 833.0,297.8 826.2,292.7 825.4,286.0 820.3,276.7 812.7,270.0 811.9,270.0 810.2,262.8 812.7,259.5 809.9,252.7 810.2,246.0 808.9,237.6 809.4,230.5"/>
<polyline points="870.0,306.2 868.3,310.4 872.5,317.2 873.4,333.2 869.5,339.0 873.4,349.2 875.9,357.6 877.6,363.5 880.1,364.3 882.3,358.4 885.2,366.0"/>
<polyline points="875.9,316.3 877.2,320.0 878.5,326.0 880.5,330.0 880.8,334.0 878.8,337.0 878.6,344.0 880.5,346.0 880.8,352.0 882.0,357.0 882.3,358.4"/>
</g>
<rect x="80" y="369" width="66" height="44" fill="#000"/>
<g stroke="#00ffff" stroke-width="1" shape-rendering="crispEdges"><line x1="79.5" y1="369" x2="79.5" y2="413"/><line x1="141.5" y1="369" x2="141.5" y2="413"/><line x1="79" y1="374.5" x2="146" y2="374.5"/></g>
<rect x="46" y="47" width="19" height="354" fill="#fff"/>
<rect x="47" y="48" width="17" height="32" fill="rgb(100,0,0)"/>
<rect x="47" y="80" width="17" height="32" fill="rgb(238,0,0)"/>
<rect x="47" y="112" width="17" height="32" fill="rgb(255,80,0)"/>
<rect x="47" y="144" width="17" height="32" fill="rgb(255,165,0)"/>
<rect x="47" y="176" width="17" height="32" fill="rgb(255,255,0)"/>
<rect x="47" y="208" width="17" height="32" fill="rgb(127,255,0)"/>
<rect x="47" y="240" width="17" height="32" fill="rgb(0,139,0)"/>
<rect x="47" y="272" width="17" height="32" fill="rgb(0,255,255)"/>
<rect x="47" y="304" width="17" height="32" fill="rgb(0,120,255)"/>
<rect x="47" y="336" width="17" height="32" fill="rgb(0,0,238)"/>
<rect x="47" y="368" width="17" height="32" fill="rgb(138,43,226)"/>
<rect x="269" y="284" width="7" height="7" fill="#ff00ff"/><rect x="376" y="382" width="7" height="7" fill="#ff00ff"/>
</svg>
<div class="t" id="title">BROADBAND ALBEDO</div>
<div class="t" id="date">Sep 29, 2016 19:00 UTC</div>
<div class="t" id="src">NASA Langley (M04.0)</div>
<div class="t" id="unit">BBALB (%)</div>
<div class="t cb" style="top:41.7px">100</div>
<div class="t cb" style="top:73.7px">80</div>
<div class="t cb" style="top:105.7px">70</div>
<div class="t cb" style="top:137.7px">60</div>
<div class="t cb" style="top:169.7px">50</div>
<div class="t cb" style="top:201.7px">40</div>
<div class="t cb" style="top:233.7px">30</div>
<div class="t cb" style="top:265.7px">25</div>
<div class="t cb" style="top:297.7px">20</div>
<div class="t cb" style="top:329.7px">15</div>
<div class="t cb" style="top:361.7px">10</div>
<div class="t cb" style="top:392.7px">0</div>
<div class="t lg" style="left:84.5px;top:376px">NO</div><div class="t lg" style="left:114.5px;top:376px">OUT</div>
<div class="t lg" style="left:84.5px;top:399.8px">RET</div><div class="t lg" style="left:114.5px;top:399.8px">VALR</div>
<div class="t gl" style="left:132.8px;top:60.8px">25W</div>
<div class="t gl" style="left:193.9px;top:60.8px">20W</div>
<div class="t gl" style="left:256.6px;top:60.8px">15W</div>
<div class="t gl" style="left:315.9px;top:60.8px">10W</div>
<div class="t gl" style="left:385.6px;top:60.8px">5W</div>
<div class="t gl" style="left:442.9px;top:60.8px">0</div>
<div class="t gl" style="left:510.3px;top:60.8px">5E</div>
<div class="t gl" style="left:565.9px;top:60.8px">10E</div>
<div class="t gl" style="left:628.5px;top:60.8px">15E</div>
<div class="t gl" style="left:690.2px;top:60.8px">20E</div>
<div class="t gl" style="left:751.9px;top:60.8px">25E</div>
<div class="t gl" style="left:813.9px;top:60.8px">30E</div>
<div class="t gl" style="left:876.5px;top:60.8px">35E</div>
<div class="t gl" style="left:878.7px;top:120.8px">5N</div>
<div class="t gl" style="left:874.8px;top:181.8px">0</div>
<div class="t gl" style="left:880.7px;top:243.8px">5S</div>
<div class="t gl" style="left:873.1px;top:305.8px">10S</div>
<div class="t gl" style="left:875.3px;top:367.8px">15S</div>
<div class="t gl" style="left:874.8px;top:428.8px">20S</div>
<div class="t gl" style="left:874.8px;top:490.8px">25S</div>
<div class="t gl" style="left:874.7px;top:552.8px">30S</div>
<div class="t gl" style="left:876.6px;top:614.8px">35S</div>
<div class="t gl" style="left:876.6px;top:675.8px">40S</div>
<div class="t mk" style="left:265.5px;top:270px">X1</div><div class="t mk" style="left:376px;top:389px">X2</div>
<div class="t" id="foot">MT10  BROADBAND ALBEDO   SEP 29, 2016 19:00Z   NASA LARC</div>
</body></html>
